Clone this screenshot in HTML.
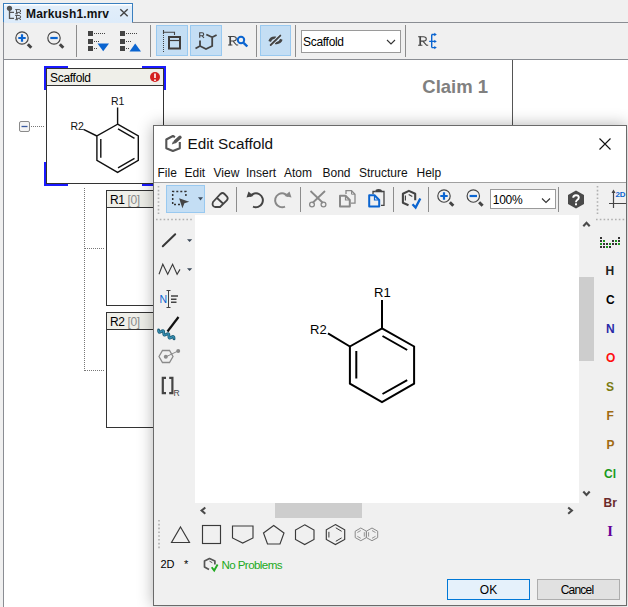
<!DOCTYPE html>
<html><head><meta charset="utf-8">
<style>
html,body{margin:0;padding:0;}
body{width:628px;height:607px;position:relative;overflow:hidden;background:#f0f0f0;font-family:"Liberation Sans",sans-serif;color:#000;}
.a{position:absolute;}
.t{position:absolute;white-space:nowrap;line-height:1;}
svg{position:absolute;left:0;top:0;overflow:visible;}
</style></head><body>
<!-- tab -->
<div class="a" style="left:3px;top:3px;width:128px;height:19px;border:1px solid #3a7fbf;border-bottom:none;background:linear-gradient(#ffffff 0,#ffffff 1px,#e2eefa 2px,#dcebfa 100%);"></div>
<div class="a" style="left:132px;top:22px;width:496px;height:1px;background:#8a8d93;"></div>
<div class="a" style="left:3px;top:22px;width:1px;height:585px;background:#8a8d93;"></div>
<div class="t" style="left:26px;top:8px;font-size:12px;font-weight:bold;letter-spacing:0.15px;color:#111;">Markush1.mrv</div>
<!-- toolbar bottom line -->
<div class="a" style="left:3px;top:59px;width:625px;height:1px;background:#8a8d93;"></div>
<!-- content -->
<div class="a" style="left:4px;top:60px;width:624px;height:547px;background:#fff;"></div>
<div class="a" style="left:512px;top:60px;width:1px;height:70px;background:#555;"></div>
<div class="t" style="left:422.3px;top:77.5px;font-size:18.5px;font-weight:bold;color:#808080;">Claim 1</div>

<!-- toggle buttons -->
<div class="a" style="left:156px;top:25px;width:30px;height:29px;border:1px solid #99c9f0;background:#c4def4;"></div>
<div class="a" style="left:190px;top:25px;width:30px;height:29px;border:1px solid #99c9f0;background:#c4def4;"></div>
<div class="a" style="left:260px;top:25px;width:29px;height:29px;border:1px solid #99c9f0;background:#c4def4;"></div>
<!-- combo -->
<div class="a" style="left:301px;top:30px;width:98px;height:20.5px;border:1px solid #9a9a9a;background:#fff;"></div>
<div class="t" style="left:303px;top:36px;font-size:12px;letter-spacing:-0.3px;color:#000;">Scaffold</div>

<!-- scaffold card -->
<div class="a" style="left:46px;top:68px;width:116px;height:114px;border:1px solid #333;background:#fff;"></div>
<div class="a" style="left:47px;top:69px;width:116px;height:16px;background:#efefe9;border-bottom:1px solid #333;"></div>
<div class="t" style="left:50px;top:72px;font-size:12px;letter-spacing:-0.3px;color:#000;">Scaffold</div>

<!-- R1 card -->
<div class="a" style="left:106px;top:190px;width:60px;height:114px;border:1px solid #333;background:#fff;"></div>
<div class="a" style="left:107px;top:191px;width:60px;height:16px;background:#efefe9;border-bottom:1px solid #333;"></div>
<div class="t" style="left:110px;top:194px;font-size:12px;letter-spacing:-0.4px;">R1 <span style="color:#8a8a8a">[0]</span></div>
<!-- R2 card -->
<div class="a" style="left:106px;top:312px;width:60px;height:114px;border:1px solid #333;background:#fff;"></div>
<div class="a" style="left:107px;top:313px;width:60px;height:16px;background:#efefe9;border-bottom:1px solid #333;"></div>
<div class="t" style="left:110px;top:316px;font-size:12px;letter-spacing:-0.4px;">R2 <span style="color:#8a8a8a">[0]</span></div>

<svg width="628" height="607" viewBox="0 0 628 607">
 <!-- tab icon -->
 <circle cx="9.5" cy="8.3" r="2.6" fill="#555"/>
 <path d="M9.5 9V18.3H14M9.5 12.4H14" stroke="#555" stroke-width="1.3" fill="none"/>
 <g stroke="#555" fill="none" stroke-width="1">
  <path d="M15.2 9.6H19Q20.7 9.6 20.7 11Q20.7 12.4 19 12.4H16.8M16.5 9.6V13.8M15.2 13.8H18M18.8 12.4L21 13.8"/>
  <path d="M15.2 15.5H19Q20.7 15.5 20.7 16.9Q20.7 18.3 19 18.3H16.8M16.5 15.5V19.7M15.2 19.7H18M18.8 18.3L21 19.7"/>
 </g>
 <path d="M120.3 9.3L127.7 16.3M127.7 9.3L120.3 16.3" stroke="#444" stroke-width="1.4"/>
 <!-- zoom in/out -->
 <circle cx="22" cy="38" r="6.2" stroke="#444" stroke-width="1.15" fill="none"/>
 <path d="M18.3 38H25.7M22 34.3V41.7" stroke="#0a64d0" stroke-width="2.2"/>
 <path d="M27.8 44.3L31.3 47.8" stroke="#444" stroke-width="3"/>
 <circle cx="54" cy="38" r="6.2" stroke="#444" stroke-width="1.15" fill="none"/>
 <path d="M50.3 38H57.7" stroke="#0a64d0" stroke-width="2.2"/>
 <path d="M59.8 44.3L63.3 47.8" stroke="#444" stroke-width="3"/>
 <path d="M76.5 25V57M150.5 25V57M256.5 25V57M295.5 25V57M405.5 25V57" stroke="#8c8c8c" stroke-width="1"/>
 <!-- tree icons -->
 <g fill="#444">
  <rect x="88" y="31" width="5" height="5"/><rect x="88" y="39" width="5" height="5"/><rect x="88" y="46" width="5" height="5"/>
  <rect x="120" y="31" width="5" height="5"/><rect x="120" y="39" width="5" height="5"/><rect x="120" y="46" width="5" height="5"/>
 </g>
 <path d="M94 33.5H106M94 41.5H100M94 48.5H97M126 33.5H138M126 41.5H132M126 48.5H129" stroke="#444" stroke-width="1" stroke-dasharray="1 1"/>
 <path d="M97.5 43.5H109L103.2 51.2Z" fill="#0a64d0"/>
 <path d="M129.5 51.5H141L135.2 43.5Z" fill="#0a64d0"/>
 <!-- toggle icon 1 -->
 <path d="M163.5 35V52" stroke="#444" stroke-width="1" stroke-dasharray="1 1"/>
 <path d="M163.5 30V34M163 32.3H174.5V35" stroke="#444" stroke-width="1.1" fill="none"/>
 <rect x="169" y="37" width="11" height="11.5" stroke="#403c3a" stroke-width="2" fill="none"/>
 <path d="M169 40.5H180" stroke="#403c3a" stroke-width="1.2"/>
 <!-- toggle icon 2 -->
 <path d="M199.7 37.8V32.7H202.1Q203.7 32.7 203.7 34.2Q203.7 35.7 202.1 35.7H199.7M201.9 35.7L204 37.8" stroke="#444" stroke-width="1.15" fill="none"/>
 <path d="M195.5 48.5L200 46V40.5M200 46L206 49L212.2 46V37.3L216.6 35M212.2 37.3L206.3 34.5" stroke="#444" stroke-width="1.8" fill="none"/>
 <!-- R search -->
 <path d="M230.2 36.2V45.2" stroke="#444" stroke-width="1.7"/><path d="M228.1 36.5H233.4Q236.3 36.5 236.3 38.7Q236.3 40.9 233.3 40.9H230.2M228.1 45.0H232.4M232.8 40.9L236.5 45.0H238.2" stroke="#444" stroke-width="1.05" fill="none"/>
 <circle cx="241" cy="40" r="3.2" stroke="#0a64d0" stroke-width="2" fill="none"/>
 <path d="M243.6 42.8L247.3 46.5" stroke="#0a64d0" stroke-width="2.4"/>
 <!-- toggle icon 3 -->
 
 <path d="M268.4 40.9C269.6 37.3 272.8 35.9 276.4 36.8L275.4 39.1C273.1 38.7 271.6 39.6 271.1 42Z" fill="#444"/>
 <path d="M282.6 39.8C281.4 43.4 278.2 44.8 274.6 43.9L275.6 41.6C277.9 42 279.4 41.1 279.9 38.7Z" fill="#444"/>
 <path d="M270.7 45L280.3 35.6" stroke="#dbeaf7" stroke-width="3.6"/>
 <path d="M270.7 45L280.3 35.6" stroke="#444" stroke-width="1.9" stroke-linecap="round"/>
 <!-- combo chevron -->
 <path d="M387 40L391 44L395 40" stroke="#333" stroke-width="1.1" fill="none"/>
 <!-- R group icon -->
 <path d="M420.2 36.4V45.4" stroke="#444" stroke-width="1.7"/><path d="M418.1 36.7H423.4Q426.3 36.7 426.3 38.9Q426.3 41.1 423.3 41.1H420.2M418.1 45.2H422.4M422.8 41.1L426.5 45.2H428.2" stroke="#444" stroke-width="1.05" fill="none"/>
 <path d="M431.7 34.5V47.6M431.7 34.5H435M429.2 41.4H435M431.7 47.6H435" stroke="#0a64d0" stroke-width="1.4" fill="none"/>
 <path d="M434.3 32.8L436.8 34.5L434.3 36.2ZM434.3 39.7L436.8 41.4L434.3 43.1ZM434.3 45.9L436.8 47.6L434.3 49.3Z" fill="#0a64d0"/>

 <!-- scaffold blue corners -->
 <path d="M45 90V67H68M142 67H165V90M45 162V185H68M142 185H165V162" stroke="#1a1aff" stroke-width="2" fill="none"/>
 <circle cx="155" cy="77" r="5" fill="#d42020"/>
 <path d="M155 73.5V78" stroke="#fff" stroke-width="1.6"/>
 <circle cx="155" cy="80.2" r="0.9" fill="#fff"/>
 <!-- small molecule -->
 <g stroke="#111" stroke-width="1.4" fill="none">
  <path d="M117.6 124.2L138.3 136V160.4L117.6 172.4L96.9 160.4V136Z"/>
  <path d="M117.6 124.2V107.5M96.9 136L83.5 129.3"/>
  <path d="M118 128.8L134.5 138.3M100.8 139V157.8M118 167.8L134.5 158.3"/>
 </g>
 <text x="111" y="105" font-size="10.5" fill="#111">R1</text>
 <text x="70.5" y="129.5" font-size="10.5" fill="#111">R2</text>
 <!-- tree -->
 <rect x="19.5" y="121.5" width="10" height="10" rx="1.5" fill="#f4f4f4" stroke="#8a8a8a" stroke-width="1"/>
 <path d="M21.5 126.5H27.5" stroke="#3a5aa0" stroke-width="1.3"/>
 <path d="M31 126.5H44M84.5 188V371M85 248.5H104M85 370.5H104" stroke="#777" stroke-width="1" stroke-dasharray="1 1" fill="none"/>
</svg>

<!-- dialog -->
<div class="a" style="left:153px;top:125px;width:472px;height:479px;border:1px solid #6a6a6a;background:#f0f0f0;box-shadow:0 0 15px rgba(0,0,0,0.3);"></div>
<div class="a" style="left:154px;top:126px;width:472px;height:56px;background:#fff;"></div>
<div class="a" style="left:154px;top:182px;width:472px;height:1px;background:#a0a0a0;"></div>
<div class="t" style="left:187.5px;top:136.2px;font-size:15.3px;color:#111;">Edit Scaffold</div>
<div class="t" style="left:157.5px;top:167px;font-size:12px;color:#111;word-spacing:0;">File</div>
<div class="t" style="left:184.5px;top:167px;font-size:12px;color:#111;">Edit</div>
<div class="t" style="left:213.5px;top:167px;font-size:12px;color:#111;">View</div>
<div class="t" style="left:246px;top:167px;font-size:12px;color:#111;">Insert</div>
<div class="t" style="left:284px;top:167px;font-size:12px;color:#111;">Atom</div>
<div class="t" style="left:322.5px;top:167px;font-size:12px;color:#111;">Bond</div>
<div class="t" style="left:359px;top:167px;font-size:12px;color:#111;">Structure</div>
<div class="t" style="left:416.5px;top:167px;font-size:12px;color:#111;">Help</div>
<!-- selected tool btn -->
<div class="a" style="left:166px;top:185px;width:37px;height:26px;border:1px solid #99c9f0;background:#c4def4;"></div>
<!-- zoom combo -->
<div class="a" style="left:490px;top:189px;width:64px;height:18px;border:1px solid #9a9a9a;background:#fff;"></div>
<div class="t" style="left:492.8px;top:194px;font-size:12px;letter-spacing:-0.3px;color:#000;">100%</div>
<!-- canvas -->
<div class="a" style="left:195px;top:215px;width:384px;height:288px;background:#fff;"></div>
<div class="a" style="left:579px;top:277px;width:15px;height:84px;background:#cdcdcd;"></div>
<div class="a" style="left:275px;top:503px;width:87px;height:15px;background:#cdcdcd;"></div>
<div class="t" style="left:374px;top:286px;font-size:13px;color:#000;">R1</div>
<div class="t" style="left:310px;top:323px;font-size:13px;color:#000;">R2</div>
<!-- status -->
<div class="t" style="left:160.5px;top:559px;font-size:11px;color:#000;">2D</div>
<div class="t" style="left:184px;top:559px;font-size:11px;color:#000;">*</div>
<div class="t" style="left:221.5px;top:558.6px;font-size:11.6px;letter-spacing:-0.6px;color:#22aa22;">No Problems</div>
<!-- buttons -->
<div class="a" style="left:447px;top:579px;width:81px;height:19px;border:1px solid #0078d7;background:#e5f1fb;"></div>
<div class="t" style="left:447px;top:584px;width:83px;text-align:center;font-size:12px;">OK</div>
<div class="a" style="left:537px;top:579px;width:81px;height:19px;border:1px solid #adadad;background:#e1e1e1;"></div>
<div class="t" style="left:535.5px;top:584px;width:83px;text-align:center;font-size:12px;letter-spacing:-0.8px;">Cancel</div>
<!-- element list -->
<div class="t" style="left:605.5px;top:265px;font-size:12px;font-weight:bold;color:#222;">H</div>
<div class="t" style="left:606px;top:294px;font-size:12px;font-weight:bold;color:#000;">C</div>
<div class="t" style="left:606px;top:323px;font-size:12px;font-weight:bold;color:#2a2aa8;">N</div>
<div class="t" style="left:606px;top:352px;font-size:12px;font-weight:bold;color:#ff0d0d;">O</div>
<div class="t" style="left:606px;top:381px;font-size:12px;font-weight:bold;color:#7a7a10;">S</div>
<div class="t" style="left:606.5px;top:410px;font-size:12px;font-weight:bold;color:#a06a10;">F</div>
<div class="t" style="left:606.5px;top:439px;font-size:12px;font-weight:bold;color:#a06a10;">P</div>
<div class="t" style="left:604px;top:468px;font-size:12px;font-weight:bold;color:#1a9a1a;">Cl</div>
<div class="t" style="left:603.5px;top:497px;font-size:12px;font-weight:bold;color:#6a2a2a;">Br</div>
<div class="t" style="left:607.2px;top:523.6px;font-size:14.5px;font-weight:bold;font-family:'Liberation Serif';color:#660099;">I</div>

<svg width="628" height="607" viewBox="0 0 628 607">
 <!-- close X -->
 <path d="M599.5 138.5L610.5 149.5M610.5 138.5L599.5 149.5" stroke="#111" stroke-width="1.1"/>
 <!-- title icon -->
 <path d="M175 137.2L172.9 136L166.3 139.5V148.2L172.9 151L179.8 148.2V142" stroke="#555" stroke-width="2.1" fill="none" stroke-linejoin="round"/>
 <path d="M180 137.3L175.3 141.5" stroke="#555" stroke-width="3.4" stroke-linecap="round"/>
 <path d="M171.8 144.5L173 141.3L175 143.3Z" fill="#555"/>
 <!-- toolbar grips -->
 <path d="M158.5 186V214M597.5 186V214" stroke="#b0b0b0" stroke-width="1.6" stroke-dasharray="1.6 2.2"/>
 <path d="M156 219.5H194M596 219.5H626M159 520V550" stroke="#b0b0b0" stroke-width="1.6" stroke-dasharray="1.6 2.2"/>
 <!-- select icon -->
 <path d="M180 204.6H172.7V191.5H185.9V198" stroke="#333" stroke-width="1.5" fill="none" stroke-dasharray="2 2"/>
 <path d="M179.1 198.2L189.2 201.8L184.4 203.2L182.4 208.2Z" fill="#444"/>
 <path d="M198 197.3H203L200.5 200.5Z" fill="#3c4a5a"/>
 <!-- eraser -->
 <path d="M213 202L220.5 194Q222.5 192 224.5 194L227 196.5Q228.5 198.5 226.8 200.5L220 207H215Q211.5 206 213 202ZM216.5 197.5L223.5 204" stroke="#444" stroke-width="1.8" fill="none"/>
 <!-- separators -->
 <path d="M236.5 187V212M300.5 187V212M393.5 187V212M428.5 187V212M558.5 187V212" stroke="#8c8c8c" stroke-width="1"/>
 <!-- undo/redo -->
 <path d="M250 196.5A7 7 0 1 1 253 206.7" stroke="#444" stroke-width="2" fill="none"/>
 <path d="M246.5 197.5L248.5 191.5L253.5 196Z" fill="#444"/>
 <path d="M288 196.5A7 7 0 1 0 285 206.7" stroke="#888" stroke-width="2" fill="none"/>
 <path d="M291.5 197.5L289.5 191.5L284.5 196Z" fill="#888"/>
 <!-- scissors -->
 <path d="M310.5 191L323 203M325 191L312.5 203" stroke="#888" stroke-width="1.8"/>
 <circle cx="312" cy="204.5" r="2.4" stroke="#888" stroke-width="1.3" fill="none"/>
 <circle cx="323.5" cy="204.5" r="2.4" stroke="#888" stroke-width="1.3" fill="none"/>
 <!-- copy -->
 <path d="M346 194V190.7H351.5L355 194.2V203.2H351" stroke="#888" stroke-width="1.3" fill="none"/>
 <path d="M351.5 190.7V194.2H355" stroke="#888" stroke-width="1" fill="none"/>
 <path d="M340 195.7H345.5L349.8 200V206.4H340Z" stroke="#888" stroke-width="2" fill="none" stroke-linejoin="round"/>
 <path d="M345.5 195.7V200H349.8" stroke="#888" stroke-width="1.2" fill="none"/>
 <!-- paste -->
 <path d="M373 194V191.5H375M381.5 191.5H384V205.3H381" stroke="#444" stroke-width="1.3" fill="none"/>
 <path d="M375 192.2Q375 189 378.5 189Q382.3 189 382.3 192.2Z" fill="#444"/>
 <path d="M369.2 195.3H374.5L379.2 200V206.4H369.2Z" stroke="#0a64d0" stroke-width="2" fill="#f0f0f0" stroke-linejoin="round"/>
 <path d="M374.5 195.3V200H379.2" stroke="#0a64d0" stroke-width="1.2" fill="none"/>
 <!-- structure check -->
 <path d="M415.2 200.3V193.8L408.9 190.9L402.9 193.8V202.7L408.5 205.2" stroke="#444" stroke-width="2.1" fill="none" stroke-linejoin="round"/>
 <path d="M405.4 195.5V200.5M408.7 194.5L412.3 196.5" stroke="#444" stroke-width="1.2"/>
 <path d="M412.5 204.3L415.6 207.6L420.3 198.5" stroke="#0a64d0" stroke-width="2.3" fill="none"/>
 <!-- zoom in/out -->
 <circle cx="444" cy="196" r="6.2" stroke="#444" stroke-width="1.15" fill="none"/>
 <path d="M440.3 196H447.7M444 192.3V199.7" stroke="#0a64d0" stroke-width="2.2"/>
 <path d="M449.8 202.3L453.3 205.8" stroke="#444" stroke-width="3"/>
 <circle cx="473.3" cy="196" r="6.2" stroke="#444" stroke-width="1.15" fill="none"/>
 <path d="M469.6 196H477" stroke="#0a64d0" stroke-width="2.2"/>
 <path d="M479.1 202.3L482.6 205.8" stroke="#444" stroke-width="3"/>
 <path d="M542 198.5L546 202.5L550 198.5" stroke="#333" stroke-width="1.1" fill="none"/>
 <!-- help -->
 <path d="M576 190.5L584 195V204L576 208.5L568 204V195Z" fill="#4a4a4a"/>
 <path d="M573.2 197.8Q573.2 195.2 576 195.2Q578.8 195.2 578.8 197.6Q578.8 199.2 577 200.2Q576 200.8 576 202.3" stroke="#fff" stroke-width="1.9" fill="none"/>
 <rect x="575" y="203.3" width="2" height="2" fill="#fff"/>
 <!-- 2D icon -->
 <path d="M613.5 191V208M609 203.5H626" stroke="#444" stroke-width="1.2"/>
 <path d="M611.5 193L613.5 189.5L615.5 193Z" fill="#444"/>
 <text x="615.4" y="197.4" font-size="8" font-weight="bold" fill="#0a64d0">2D</text>

 <!-- left tools -->
 <path d="M162.8 246.2L175.2 234.3" stroke="#383838" stroke-width="2" stroke-linecap="round"/>
 <path d="M187 239.2H192.2L189.6 242Z M187 268.3H192.2L189.6 271Z" fill="#3c4a5a"/>
 <path d="M159 274.3L162.8 264.2L167.7 274.3L172.6 264.2L177.1 274.3L180 269.4" stroke="#3a3a3a" stroke-width="1.1" fill="none"/>
 <text x="159.5" y="303" font-size="10.5" fill="#0a64d0">N</text>
 <path d="M168.5 290.5V307.5M166.5 290.5H170.5M166.5 307.5H170.5" stroke="#444" stroke-width="1"/>
 <path d="M171 296H178M171 299.2H176.5M171 302.3H176.5" stroke="#444" stroke-width="1.5"/>
 <path d="M178.5 317L167.5 331.5" stroke="#111" stroke-width="2.2"/>
 <path d="M158.6 330.0Q158.3 333.5 161.2 331.5Q164.0 329.4 163.7 332.9Q163.4 336.4 166.3 334.4Q169.2 332.4 168.9 335.9Q168.6 339.4 171.4 337.3Q174.3 335.3 174.0 338.8" stroke="#1d5f7a" stroke-width="2.9" fill="none" stroke-linecap="round"/><path d="M158.6 330.0Q158.3 333.5 161.2 331.5Q164.0 329.4 163.7 332.9Q163.4 336.4 166.3 334.4Q169.2 332.4 168.9 335.9Q168.6 339.4 171.4 337.3Q174.3 335.3 174.0 338.8" stroke="#3a96bb" stroke-width="1.1" fill="none"/>
 <path d="M159 356.5L162.5 350.5H169.5L173 356.5L169.5 362.5H162.5Z" stroke="#8a8a8a" stroke-width="1.3" fill="none"/>
 <circle cx="165.8" cy="356.8" r="2" fill="#8a8a8a"/>
 <circle cx="178.2" cy="351" r="2" fill="#8a8a8a"/>
 <path d="M166 356.8L178 351" stroke="#8a8a8a" stroke-width="1"/>
 <path d="M166 377.8H162.8V393.2H166M169.2 377.8H172.4V393.2H169.2" stroke="#444" stroke-width="2.2" fill="none"/>
 <text x="173.6" y="395.8" font-size="8.5" fill="#444">R</text>

 <!-- big molecule -->
 <g stroke="#000" stroke-width="2" fill="none">
  <path d="M382 328.3L414.1 346.5V383.6L382 402L349.9 383.6V346.5Z"/>
  <path d="M382 328.3V300M349.9 346.5L328 333.3"/>
  <path d="M382.5 336L407.2 350M356.3 351V378.6M382.5 394L407.2 380.2"/>
 </g>
 <!-- scroll arrows -->
 <path d="M583.3 226.3L586.5 222.8L589.7 226.3M583.3 491.5L586.5 495L589.7 491.5M205.3 507.5L201.6 510.6L205.3 513.7M568.2 507.5L571.9 510.6L568.2 513.7" stroke="#4a4a4a" stroke-width="2.1" fill="none"/>
 <!-- periodic table icon -->
 <g fill="#333">
  <rect x="600" y="237" width="2" height="2"/><rect x="600" y="240" width="2" height="2"/><rect x="615" y="243" width="2" height="2"/><rect x="600" y="246" width="2" height="2"/>
  <rect x="603" y="243" width="2" height="2"/><rect x="603" y="246" width="2" height="2"/>
  <rect x="606" y="243" width="2" height="2"/><rect x="609" y="246" width="2" height="2"/>
  <rect x="612" y="240" width="2" height="2"/><rect x="612" y="243" width="2" height="2"/>
  <rect x="618" y="237" width="2" height="2"/><rect x="618" y="240" width="2" height="2"/>
 </g>
 <g fill="#1a9a1a">
  <rect x="603" y="240" width="2" height="2"/><rect x="600" y="243" width="2" height="2"/><rect x="606" y="246" width="2" height="2"/><rect x="609" y="243" width="2" height="2"/><rect x="615" y="240" width="2" height="2"/><rect x="618" y="243" width="2" height="2"/>
 </g>
 <!-- shapes -->
 <g stroke="#3a3a3a" stroke-width="1.15" fill="none">
  <path d="M180.5 527L189.5 542.5H171.5Z"/>
  <rect x="202.5" y="525.5" width="18" height="18"/>
  <path d="M232.5 526H253V538L242.7 543L232.5 538Z"/>
  <path d="M273.7 525.5L284 533L280 544H267.5L263.5 533Z"/>
  <path d="M304.7 524.8L314 530V539.5L304.7 544.5L295.5 539.5V530Z"/>
  <path d="M335.4 524.6L344.7 529.8V539.5L335.4 544.6L326.3 539.5V529.8Z"/>
  <path d="M328.9 531.8V537.5M335.8 527.8L341.6 531.3M335.8 541.3L341.6 537.9" stroke-width="1"/>
 </g>
 <g stroke="#8a8a8a" stroke-width="1" fill="none">
  <path d="M360.8 528L366.4 531.2V537.6L360.8 540.7L355.2 537.6V531.2Z"/>
  <path d="M372 528L377.7 531.2V537.6L372 540.7L366.4 537.6V531.2Z"/>
  <path d="M357.3 532.5L360.8 530.5M357.3 536.3L360.8 538.3M364.3 532.2V536.6M368.6 532.2V536.6M372 530.5L375.5 532.5M372 538.3L375.5 536.3" stroke-width="0.9"/>
 </g>
 <!-- status icon -->
 <path d="M214.9 564.5V561L209.5 558.5L204.5 561V567L209 569.5" stroke="#555" stroke-width="1.7" fill="none" stroke-linejoin="round"/>
 <path d="M209.5 561.2L212.3 562.7" stroke="#555" stroke-width="1"/>
 <path d="M211.7 567.2L214.2 570.5L217.6 564.5" stroke="#22aa22" stroke-width="1.9" fill="none"/>
</svg>
</body></html>
